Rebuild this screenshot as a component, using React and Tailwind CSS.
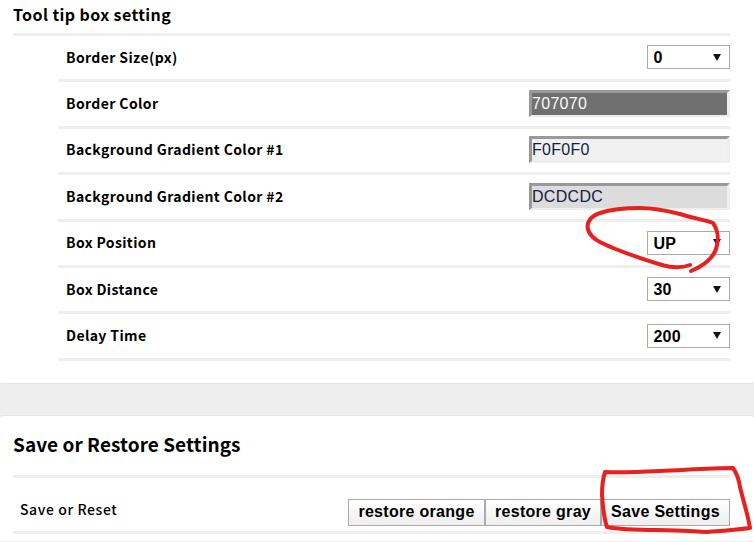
import React from 'react';

const rows = [
  { label: 'Border Size(px)', type: 'select', value: '0' },
  { label: 'Border Color', type: 'color', value: '707070', cls: 'bg-[#707070] text-[#fafafa]' },
  { label: 'Background Gradient Color #1', type: 'color', value: 'F0F0F0', cls: 'bg-[#f0f0f0] text-[#14213d]' },
  { label: 'Background Gradient Color #2', type: 'color', value: 'DCDCDC', cls: 'bg-[#dcdcdc] text-[#14213d]' },
  { label: 'Box Position', type: 'select', value: 'UP' },
  { label: 'Box Distance', type: 'select', value: '30' },
  { label: 'Delay Time', type: 'select', value: '200' },
];

const FakeSelect = ({ value }) => (
  <div className="w-[83px] h-[24px] border border-[#aaaaaa] bg-white flex items-center justify-between pl-[5px] pr-[8px] text-[16px] font-bold leading-none tracking-[0.2px] text-black font-['Liberation_Sans',sans-serif]">
    <span className="pt-[2px] pl-[0.5px]">{value}</span>
    <svg width="8" height="7" viewBox="0 0 8 7"><path d="M0 0h8L4 7z" fill="#111" /></svg>
  </div>
);

const ColorInput = ({ value, cls }) => (
  <div className={`w-[201px] h-[27px] border-t-[3px] border-l-[3px] border-r-[3px] border-b-[2px] border-t-[#999999] border-l-[#999999] border-r-[#eeeeee] border-b-[#eeeeee] flex items-center text-[16px] leading-none tracking-[0.3px] font-['Liberation_Sans',sans-serif] ${cls}`}>
    {value}
  </div>
);

const Btn = ({ children, cls }) => (
  <button className={`h-[27px] border border-[#aaaaaa] bg-gradient-to-b from-white to-[#eeeeee] text-[16px] font-bold leading-none tracking-[0.3px] text-black font-['Liberation_Sans',sans-serif] ${cls}`}>
    {children}
  </button>
);

export default function App() {
  return (
    <div className="relative w-[754px] h-[542px] overflow-hidden bg-[#eeeeee] font-['Noto_Sans_CJK_KR','Noto_Sans',sans-serif] text-black">
      <section className="h-[384px] bg-white rounded-b-[3px] border-b border-[#e4e4e4] pl-[13px] pr-[24px]">
        <h2 className="h-[36px] pb-[5px] border-b-[3px] border-[#eeeeee] flex items-center text-[16px] font-semibold tracking-[0.4px]">
          Tool tip box setting
        </h2>
        <div className="ml-[45px]">
          {rows.map((row) => (
            <div key={row.label} className="h-[46.4px] border-b-[3px] border-[#eeeeee] flex items-center justify-between pb-[1px]">
              <span className="pl-[8px] text-[14px] font-semibold tracking-[0.38px]">{row.label}</span>
              {row.type === 'select' ? <FakeSelect value={row.value} /> : <ColorInput value={row.value} cls={row.cls} />}
            </div>
          ))}
        </div>
      </section>

      <section className="mt-[31px] h-[126px] bg-white rounded-t-[3px] border-t border-[#e4e4e4] pl-[13px] pr-[24px]">
        <h2 className="h-[62px] pb-[2px] border-b-[3px] border-[#eeeeee] flex items-center text-[19px] font-semibold tracking-[0.05px]">
          Save or Restore Settings
        </h2>
        <div className="h-[56px] pt-[15px] border-b-[3px] border-[#eeeeee] flex items-center justify-between">
          <span className="pl-[7px] mb-[5px] text-[14px] font-medium tracking-[0.6px]">Save or Reset</span>
          <div className="flex">
            <Btn cls="w-[137px]">restore orange</Btn>
            <Btn cls="w-[116px]">restore gray</Btn>
            <Btn cls="w-[129px]">Save Settings</Btn>
          </div>
        </div>
      </section>

      <svg className="absolute inset-0 pointer-events-none" width="754" height="542" viewBox="0 0 754 542" fill="none">
        <path
          d="M690 265 C682 268 672 268 662 265 C645 260 628 254 613 248 C602 243 593 240 589 232 C585 224 590 216 600 213 C612 209 625 208 640 208 C655 208 668 211 680 214 C692 218 705 220 713 223 C718 230 719 240 716 249 C713 258 703 266 691 271"
          stroke="#e8201f" strokeWidth="4" strokeLinecap="round" strokeLinejoin="round"
        />
        <path
          d="M605 472 C620 473 640 472 660 471 C685 470 710 468 733 468 C738 475 739 480 740 487 C743 500 748 515 750 528 C735 530 720 531 707 532 C690 531 675 530 657 530 C640 530 622 530 607 527 C603 515 603 505 602 495 C602 487 603 478 605 472 Z"
          stroke="#e8201f" strokeWidth="4" strokeLinecap="round" strokeLinejoin="round"
        />
      </svg>
    </div>
  );
}
